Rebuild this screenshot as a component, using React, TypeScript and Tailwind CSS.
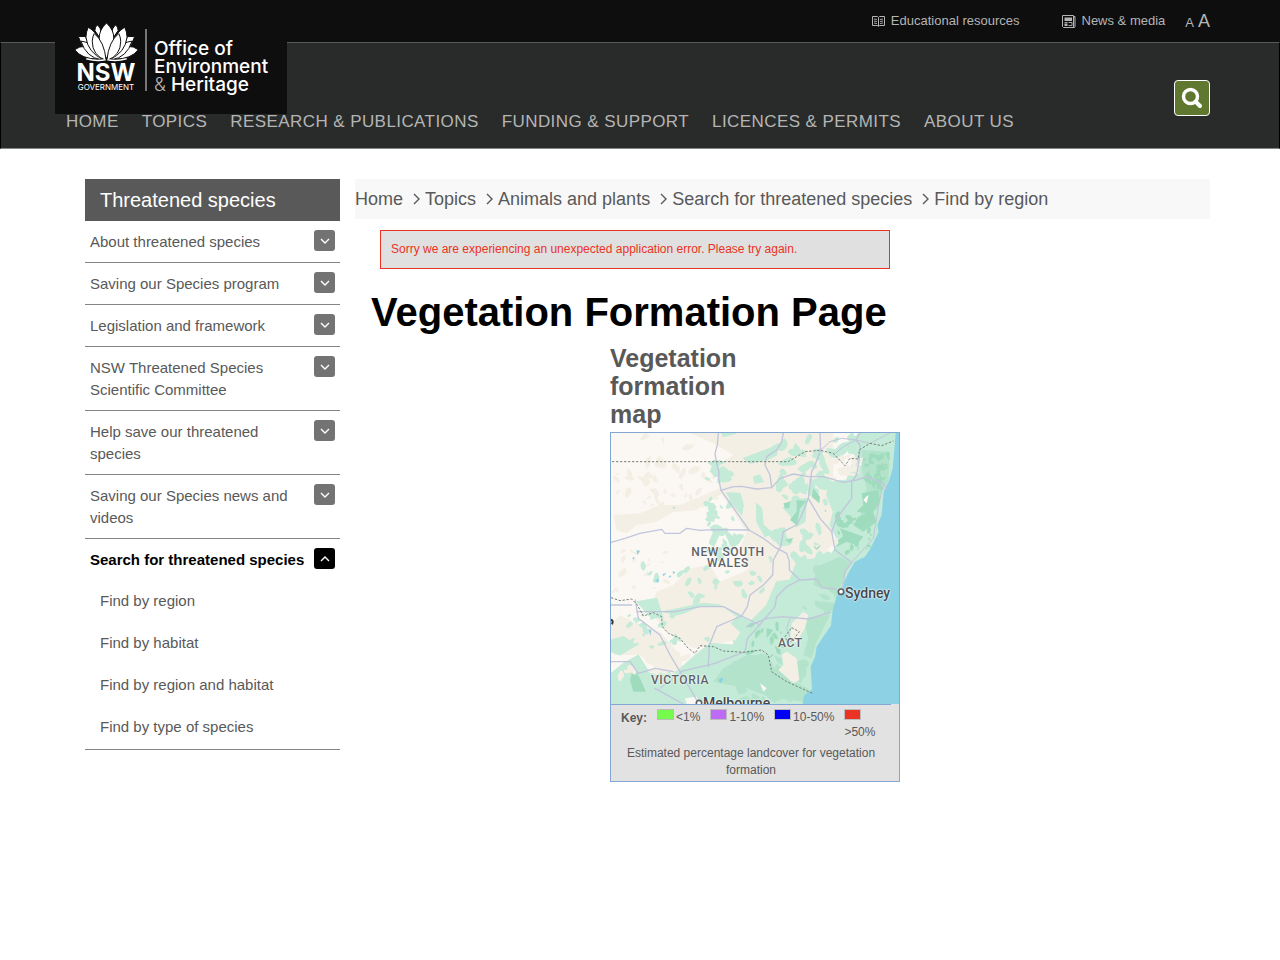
import React, { useState } from "react";

interface MenuItem {
  label: string;
  children?: string[];
}

const navLinks = [
  "HOME",
  "TOPICS",
  "RESEARCH & PUBLICATIONS",
  "FUNDING & SUPPORT",
  "LICENCES & PERMITS",
  "ABOUT US",
];

const menu: MenuItem[] = [
  { label: "About threatened species" },
  { label: "Saving our Species program" },
  { label: "Legislation and framework" },
  { label: "NSW Threatened Species Scientific Committee" },
  { label: "Help save our threatened species" },
  { label: "Saving our Species news and videos" },
  {
    label: "Search for threatened species",
    children: [
      "Find by region",
      "Find by habitat",
      "Find by region and habitat",
      "Find by type of species",
    ],
  },
];

const crumbs = [
  "Home",
  "Topics",
  "Animals and plants",
  "Search for threatened species",
  "Find by region",
];

const Lotus: React.FC = () => (
  <svg viewBox="104 70 190 116" className="block h-[39px] w-[63px]" aria-hidden="true">
    <g fill="#fff" stroke="#0e0e0e" strokeWidth="3" strokeLinejoin="round">
      <path d="M164 92 Q164 80 172 75 Q182 84 183 98 L176 110Z" />
      <path d="M234 92 Q234 80 226 75 Q216 84 215 98 L222 110Z" />
      <path d="M114 110 L136 110 L146 140 L124 134Z" />
      <path d="M284 110 L262 110 L252 140 L274 134Z" />
      <path d="M103 150 Q118 138 134 140 Q160 152 174 178 Q124 178 103 150Z" />
      <path d="M295 150 Q280 138 264 140 Q238 152 224 178 Q274 178 295 150Z" />
      <path d="M122 124 Q148 126 168 150 Q180 164 184 180 Q138 174 122 124Z" />
      <path d="M276 124 Q250 126 230 150 Q218 164 214 180 Q260 174 276 124Z" />
      <path d="M144 82 Q168 96 178 122 Q188 150 190 180 Q142 158 137 112 Q137 96 144 82Z" />
      <path d="M254 82 Q230 96 220 122 Q210 150 208 180 Q256 158 261 112 Q261 96 254 82Z" />
      <path d="M199 69 Q223 92 221 118 Q216 150 199 176 Q182 150 177 118 Q175 92 199 69Z" />
      <path d="M162 101 Q192 124 198 182 Q156 168 156 124 Q157 110 162 101Z" />
      <path d="M236 101 Q206 124 200 182 Q242 168 242 124 Q241 110 236 101Z" />
    </g>
    <path d="M138 177 Q168 186 196 180 M260 177 Q230 186 202 180" fill="none" stroke="#fff" strokeWidth="4" />
  </svg>
);

const Logo: React.FC = () => (
  <a
    href="#home"
    className="absolute top-0 left-0 z-10 flex h-[114px] w-[232px] bg-[#0e0e0e] pt-[23px] pl-[19px] font-['Inter',sans-serif] text-white"
  >
    <span className="flex w-[64px] flex-col items-center">
      <Lotus />
      <span className="text-[24px] leading-[21px] font-bold">NSW</span>
      <span className="text-[8px] leading-[9px]">GOVERNMENT</span>
    </span>
    <span className="mt-[6px] ml-[7px] h-[62px] w-[2px] bg-[#777]" />
    <span className="mt-[17px] ml-[7px] text-[19px] leading-[18px] font-medium">
      Office of
      <br />
      Environment
      <br />
      <span className="font-light text-[#b5b5b5]">&amp;</span> Heritage
    </span>
  </a>
);

const BookIcon: React.FC = () => (
  <svg viewBox="0 0 13 11" className="h-[11px] w-[13px]" fill="none" stroke="#b5b5b5" aria-hidden="true">
    <path d="M.5 .5H5.5L6.5 1.5 7.5 .5H12.5V9.5H7.5L6.5 10.5 5.5 9.5H.5ZM6.5 1.5V10" />
    <path d="M2 3l3 .5M2 5l3 .5M2 7l3 .5M8 3.5l3-.5M8 5.5l3-.5M8 7.5l3-.5" strokeWidth=".9" />
  </svg>
);

const NewsIcon: React.FC = () => (
  <svg viewBox="0 0 14 13" className="h-[13px] w-[14px]" fill="none" stroke="#b5b5b5" aria-hidden="true">
    <path d="M.5 .5H11.5V12.5H1.5L.5 11.5ZM11.5 1.5H13V11.5L12.5 12.5H11" />
    <path d="M2.500 2.500h7.500v3.500h-7.500zM2.500 8.500h3v2.500h-3z" fill="#b5b5b5" stroke="none" />
    <path d="M2.500 7.500h3M6.500 7.500h3.500v3h-3.500" strokeWidth=".9" />
  </svg>
);

const Chevron: React.FC<{ d: string; className: string }> = ({ d, className }) => (
  <svg viewBox="0 0 12 12" className={className} fill="none" stroke="currentColor" strokeWidth="1.4" aria-hidden="true">
    <path d={d} />
  </svg>
);

const Header: React.FC = () => (
  <header className="bg-[#0e0e0e] text-[#b5b5b5]">
    <div className="relative mx-auto flex h-[42px] max-w-[1170px] items-center justify-end pr-[15px] text-[13px]">
      <Logo />
      <a href="#education" className="flex items-center gap-[6px]">
        <BookIcon />
        Educational resources
      </a>
      <a href="#news" className="ml-[42px] flex items-center gap-[6px]">
        <NewsIcon />
        News &amp; media
      </a>
      <span className="ml-[20px] flex items-baseline gap-1">
        <button type="button" aria-label="Smaller text">A</button>
        <button type="button" aria-label="Larger text" className="text-[18px]">A</button>
      </span>
    </div>
    <div className="border border-x-black border-t-[#595959] border-b-[#858585] bg-[#292b2a]">
      <div className="mx-auto flex max-w-[1170px] items-end justify-between pt-[37px] pr-[15px] pb-[15px] pl-[11px]">
        <nav className="flex gap-[23px] text-[17px] leading-[22px] tracking-wide">
          {navLinks.map((link) => (
            <a key={link} href="#nav">{link}</a>
          ))}
        </nav>
        <button
          type="button"
          aria-label="Search"
          className="mb-[17px] flex size-[36px] items-center justify-center rounded-[4px] border border-white bg-[#5f772f]"
        >
          <svg viewBox="0 0 22 22" className="size-[22px]" fill="none" stroke="#fff" aria-hidden="true">
            <circle cx="9.500" cy="9.500" r="7" strokeWidth="3.400" />
            <path d="M14.500 14.500L19 19" strokeWidth="4" strokeLinecap="round" />
          </svg>
        </button>
      </div>
    </div>
  </header>
);

const Sidebar: React.FC = () => {
  const [open, setOpen] = useState("Search for threatened species");

  return (
    <aside className="w-[255px] shrink-0 text-[15px] leading-[22px]">
      <h2 className="bg-[#595959] px-[15px] py-[10px] text-[20px] text-white">
        Threatened species
      </h2>
      <ul>
        {menu.map((item) => {
          const active = item.label === open;
          return (
            <li key={item.label} className="border-b border-[#858585] py-[9px]">
              <div className="flex items-start justify-between px-[5px]">
                <a href="#topic" className={"pt-px " + (active ? "font-bold text-black" : "w-[205px]")}>
                  {item.label}
                </a>
                <button
                  type="button"
                  aria-label={"Toggle " + item.label}
                  aria-expanded={active}
                  onClick={() => setOpen(active ? "" : item.label)}
                  className={
                    "flex size-[21px] shrink-0 items-center justify-center rounded-[3px] text-white " +
                    (active ? "bg-black" : "bg-[#737373]")
                  }
                >
                  <Chevron className="size-[12px]" d={active ? "M2 8l4-4 4 4" : "M2 4l4 4 4-4"} />
                </button>
              </div>
              {active && item.children && (
                <ul className="pt-[9px] pl-[15px]">
                  {item.children.map((child) => (
                    <li key={child} className="py-[10px] last:pb-[2px]">
                      <a href="#find">{child}</a>
                    </li>
                  ))}
                </ul>
              )}
            </li>
          );
        })}
      </ul>
    </aside>
  );
};

// irregular vegetation patches inside a box, same result for the same seed
function patches(seed: number, count: number, x0: number, y0: number, x1: number, y1: number, size: number) {
  let s = seed * 7919;
  const rnd = () => {
    s = (s * 16807) % 2147483647;
    return s / 2147483647;
  };
  let d = "";
  for (let i = 0; i < count; i++) {
    const cx = x0 + rnd() * (x1 - x0);
    const cy = y0 + rnd() * (y1 - y0);
    const r = size * (0.4 + rnd());
    const tilt = rnd() * 3;
    const pts: number[][] = [];
    for (let k = 0; k < 9; k++) {
      const a = (k / 9) * Math.PI * 2;
      const q = r * (0.5 + rnd() * 0.8);
      const px = Math.cos(a) * q * 1.4;
      const py = Math.sin(a) * q * 0.7;
      pts.push([
        cx + px * Math.cos(tilt) - py * Math.sin(tilt),
        cy + px * Math.sin(tilt) + py * Math.cos(tilt),
      ]);
    }
    // round the corners by running the curve through the edge midpoints
    pts.forEach((p, k) => {
      const n = pts[(k + 1) % pts.length];
      const mid = ((p[0] + n[0]) / 2).toFixed(0) + " " + ((p[1] + n[1]) / 2).toFixed(0);
      d += k ? "Q" + p[0].toFixed(0) + " " + p[1].toFixed(0) + " " + mid : "M" + mid;
    });
    d += "Z";
  }
  return d;
}

const mapLabel =
  "absolute text-center font-['Roboto',sans-serif] font-medium text-[#5f6368] [text-shadow:0_0_2px_#fff,0_0_2px_#fff]";

const RegionMap: React.FC = () => (
  <div className="relative h-[271px] overflow-hidden">
    <svg viewBox="33 24 864 813" preserveAspectRatio="none" className="block size-full" role="img" aria-label="Map of New South Wales">
      <path d="M33 24H897V837H33Z" fill="#fbf8f3" />
      <g fill="#f3efe4" strokeLinejoin="round">
        <path d="M270 24H700V330L610 480 470 470 420 370 440 320 380 230 360 200 350 120 400 90 350 60Z" />
        <path d="M40 270L120 265 180 240 240 240 300 215 360 190 370 205 330 225 290 255 220 262 170 290 110 300 80 325 50 315Z" />
        <path d="M170 500L220 480 270 430 330 420 360 470 430 440 520 380 560 500 500 600 440 640 280 670 200 620 150 560Z" />
        <path d="M60 570L100 590 180 620 240 690 250 740 180 740 120 690 40 690 33 600Z" />
        <path d={patches(11, 34, 45, 130, 350, 250, 11)} />
        <path d={patches(5, 18, 40, 340, 220, 500, 10)} />
        <path d={patches(8, 7, 110, 30, 270, 120, 15)} />
      </g>
      <g fill="#c3ebd8" stroke="#c3ebd8" strokeWidth="3" strokeLinejoin="round">
        <path d="M690 172L740 165 790 24H890V560L640 837H33V745L70 715 115 690 150 745 230 740 280 695 330 655 400 660 430 610 500 540 530 470 570 465 590 410 650 400 690 395 715 350 690 300 700 260 680 210Z" />
        <path d="M380 203L420 205 430 240 425 270 400 240Z" />
        <path d="M470 235L485 250 490 300 520 325 495 335 470 290Z" />
        <path d="M365 24H410L370 35ZM430 100L510 70 535 55 530 90 500 105 450 115ZM460 155L480 150 490 170 465 175Z" />
        <path d="M565 230L620 220 615 290 590 305 570 270 550 250Z" />
        <path d="M33 645L70 635 110 660 60 690 33 680ZM110 530L170 520 190 580 150 575Z" />
        <path d="M190 560L310 535 360 540 450 590 490 570 420 620 340 545 230 570Z" />
        <path d={patches(21, 26, 540, 110, 690, 235, 16)} />
        <path d={patches(37, 18, 540, 30, 800, 130, 18)} />
        <path d={patches(43, 14, 320, 110, 410, 165, 12)} />
        <path d={patches(47, 16, 310, 310, 410, 400, 14)} />
        <path d={patches(53, 14, 310, 220, 400, 300, 9)} />
        <path d={patches(59, 26, 510, 310, 680, 430, 15)} />
        <path d={patches(61, 22, 120, 420, 500, 530, 10)} />
        <path d={patches(67, 28, 80, 560, 440, 690, 9)} />
      </g>
      <g fill="#b3e3cb">
        <path d="M785 75L870 80 865 170 845 190 835 250 780 280 800 190 785 130Z" />
        <path d="M650 425L720 395 750 410 730 460 700 500 640 480Z" />
        <path d="M440 690L500 690 530 740 630 795 620 830 520 820 440 790 340 770 370 730Z" />
        <path d="M610 580L690 570 650 650 635 700 610 690 625 640Z" />
        <path d={patches(71, 30, 400, 690, 620, 830, 18)} />
        <path d={patches(73, 25, 600, 420, 750, 560, 15)} />
      </g>
      <g fill="#9fdcbd">
        <path d="M785 205L835 195 840 230 820 260 830 290 790 320 760 300 775 275 800 265 770 260 790 240Z" />
        <path d="M720 310L750 320 790 335 770 360 740 350 710 365 705 350 730 335Z" />
        <path d="M590 225L620 228 600 250 590 300 570 285 590 260ZM550 235L570 230 568 250 555 250ZM640 190L660 215 658 235 635 215ZM555 345L580 338 570 355ZM640 365L665 360 650 375Z" />
        <path d="M100 725L120 760 138 800 100 800 90 765ZM500 610L520 615 500 640Z" />
        <path d={patches(83, 26, 790, 80, 865, 190, 9)} />
        <path d={patches(89, 20, 710, 260, 820, 400, 9)} />
        <path d={patches(97, 14, 450, 600, 560, 700, 8)} />
      </g>
      <g fill="#f3efe4">
        <path d="M545 690L560 680 590 700 598 765 580 775 535 735 550 720ZM575 595L610 560 625 570 615 610 590 650 570 650ZM300 545L370 545 410 575 360 630 300 640 240 620 230 575Z" />
        <path d={patches(101, 10, 650, 330, 705, 380, 13)} />
        <path d={patches(103, 14, 700, 90, 780, 160, 11)} />
        <path d={patches(107, 14, 60, 690, 280, 750, 11)} />
      </g>
      <path d="M480 775L500 790 490 800ZM255 820L290 815 300 837 260 837ZM798 215L806 210 800 235 790 225ZM120 580L170 585 175 610 140 600Z" fill="#fbf8f3" />
      <path d="M887 24L883 75 878 130 868 165 851 200 845 270 832 300 836 320 812 370 795 395 765 410 747 440 735 465 728 490 710 515 698 555 693 602 670 635 650 665 645 695 632 725 636 793 612 812 608 837H897V24Z" fill="#8cd1e4" />
      <path d="M110 375l10 3-8 12ZM97 398l7-3-4 10ZM187 447l12-3-8 10ZM218 438l8 4-6 6ZM165 465l12-3-2 12ZM205 458l6-8 3 6ZM220 245l6 3-5 4ZM145 613l9 2-3 18ZM355 765l10-8 5 6-9 12ZM674 254l6 4-5 3Z" fill="#8cd1e4" />
      <g fill="none" stroke="#c1c6dc" strokeWidth="4" strokeLinejoin="round" strokeLinecap="round">
        <path d="M355 24L352 60 345 85 350 115 357 140 356 160 363 196 400 248 447 315 490 340 525 367 560 385 568 410 568 435 600 465 650 462 665 488 710 492" />
        <path d="M363 196L400 185 425 184 470 192 515 188 540 160 580 147 625 155 670 155 730 172 770 165 800 155 850 175 860 190" />
        <path d="M33 352L75 340 120 325 185 313 195 325 240 325 260 310 300 316 340 314 447 315" />
        <path d="M550 24L545 50 530 75 500 95 495 120 510 150 515 188" />
        <path d="M660 24L662 76 645 120 635 140 625 220 605 270 590 300 550 320 542 365 520 405 518 450 490 480 450 510 442 545 425 573 480 600" />
        <path d="M625 220L660 280 695 320 705 375 755 412 735 440 728 490" />
        <path d="M780 24L768 45 780 60 778 100 770 150 755 170 755 220 710 280 695 320" />
        <path d="M662 76L690 50 725 40 768 45M700 90L730 65 768 45 810 55 870 24M850 175L835 245 820 340 755 412" strokeWidth="3" />
        <path d="M600 465L560 485 530 515 525 545 470 610 442 640 435 680 345 715 240 740 290 825" />
        <path d="M106 525L115 580 180 630 210 690 240 740M110 560L225 560 300 545 370 545 425 573 350 605 328 660 325 725" />
        <path d="M33 710L90 710 115 745 165 730 220 740M165 790L250 837M440 605L500 580 550 575 625 582 692 562M33 540L95 540" />
        <path d="M180 790L240 745M570 580L560 610 575 650" strokeWidth="3" />
      </g>
      <g fill="none" stroke="#77817c" strokeWidth="3" strokeDasharray="7 5">
        <path d="M36 110H565L590 95 615 80 660 76 700 85 735 122 750 100 775 102 778 75 810 55 845 62 880 48" />
        <path d="M33 518L60 527 95 522 112 540 130 573 160 563 185 575 187 605 205 625 240 640 265 670 285 685 300 662 340 665 370 678 430 682 485 675 505 690 515 740 560 770 637 805" />
        <path d="M575 608L598 620 583 640 565 655 555 635Z" />
      </g>
      <circle cx="723" cy="500" r="8" fill="#fff" stroke="#5f6368" strokeWidth="5" />
      <circle cx="297" cy="834" r="8" fill="#fff" stroke="#5f6368" strokeWidth="5" />
      <path d="M33 584q8 2 3 14" stroke="#333" strokeWidth="6" fill="none" />
    </svg>
    <span className={mapLabel + " top-[114px] left-[77px] w-20 text-[12px] leading-[11px] tracking-wider"}>
      NEW SOUTH WALES
    </span>
    <span className={mapLabel + " top-[152px] left-[234px] text-[14px] leading-[16px] text-[#44484c]"}>Sydney</span>
    <span className={mapLabel + " top-[204px] left-[167px] text-[12px] leading-[12px] tracking-wider"}>ACT</span>
    <span className={mapLabel + " top-[241px] left-[40px] text-[12px] leading-[12px] tracking-wider"}>VICTORIA</span>
    <span className={mapLabel + " top-[262px] left-[92px] text-[14px] leading-[16px] text-[#44484c]"}>Melbourne</span>
  </div>
);

const swatch = "block h-[11px] w-[17px] border border-[#bcbcbc]";

const MapPanel: React.FC = () => (
  <section className="mt-[9px] ml-[255px] w-[290px]">
    <h2 className="mb-[4px] w-[150px] text-[25px] leading-[28px] font-bold">
      Vegetation formation map
    </h2>
    <div className="border border-[#84a6d3] bg-[#e2e2e2] text-[12px]">
      <RegionMap />
      <div className="mr-[8px] border-t border-[#84a6d3] px-[10px] leading-[17px]">
        <ul className="flex items-start gap-[10px] pt-[4px]">
          <li className="pt-px font-bold">Key:</li>
          <li className="flex gap-[2px]">
            <i className={swatch + " bg-[#76fb4c]"} />
            &lt;1%
          </li>
          <li className="flex gap-[2px]">
            <i className={swatch + " bg-[#bd6bf6]"} />
            1-10%
          </li>
          <li className="flex gap-[2px]">
            <i className={swatch + " bg-[#0000f5]"} />
            10-50%
          </li>
          <li>
            <i className={swatch + " mb-[4px] bg-[#eb3323]"} />
            &gt;50%
          </li>
        </ul>
        <p className="pt-[4px] pb-[2px] text-center">
          Estimated percentage landcover for vegetation formation
        </p>
      </div>
    </div>
  </section>
);

const App: React.FC = () => {
  return (
    <div className="min-h-screen bg-white font-['Liberation_Sans',Arial,sans-serif] text-[#595959]">
      <Header />
      <div className="mx-auto flex max-w-[1170px] items-start gap-[15px] pt-[30px] pr-[15px] pl-[30px]">
        <Sidebar />
        <main className="min-w-0 flex-1">
          <nav aria-label="Breadcrumb" className="flex h-[40px] items-center bg-[#f8f8f8] text-[18px]">
            {crumbs.map((crumb, i) => (
              <span key={crumb} className="flex items-center">
                {i > 0 && <Chevron className="mr-[2px] ml-[8px] size-[12px]" d="M3 1l5 5-5 5" />}
                <a href="#crumb">{crumb}</a>
              </span>
            ))}
          </nav>
          <p
            role="alert"
            className="mt-[11px] ml-[25px] w-[510px] border border-[#ea3323] bg-[#e0e0e0] px-[10px] py-[9px] text-[12px] leading-[19px] text-[#ea3323]"
          >
            Sorry we are experiencing an unexpected application error. Please try again.
          </p>
          <h1 className="mt-[20px] ml-[16px] text-[40px] leading-[46px] font-bold text-black">
            Vegetation Formation Page
          </h1>
          <MapPanel />
        </main>
      </div>
    </div>
  );
};

export default App;
